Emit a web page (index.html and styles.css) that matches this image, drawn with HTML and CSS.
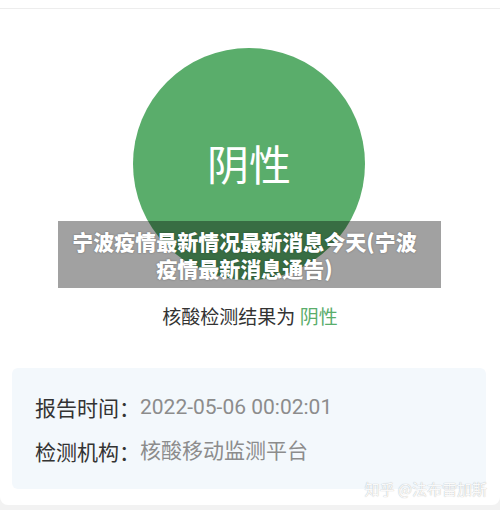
FILE: index.html
```html
<!DOCTYPE html>
<html lang="zh-CN">
<head>
<meta charset="utf-8">
<title>核酸检测结果</title>
<link rel="stylesheet" href="styles.css">
</head>
<body>
<div class="topbar"></div>
<main class="sheet">
  <div class="badge"><span class="badge-text">阴性</span></div>
  <p class="result">核酸检测结果为 <span class="result-value">阴性</span></p>
  <section class="info">
    <div class="info-row"><span class="info-label">报告时间：</span><span class="info-value">2022-05-06 00:02:01</span></div>
    <div class="info-row"><span class="info-label">检测机构：</span><span class="info-value">核酸移动监测平台</span></div>
  </section>
  <h1 class="caption">宁波疫情最新情况最新消息今天(宁波疫情最新消息通告)</h1>
  <div class="watermark">知乎 @法布雷加斯</div>
</main>
</body>
</html>
```
FILE: styles.css
```css
html, body {
  margin: 0;
  padding: 0;
}

body {
  width: 500px;
  height: 510px;
  overflow: hidden;
  background: #f2f2f2;
  font-family: Roboto, "Noto Sans CJK SC", sans-serif;
}

.topbar {
  height: 8px;
  background: #ffffff;
  border-bottom: 1px solid #ededed;
}

.sheet {
  position: relative;
  height: 496px;
  box-sizing: border-box;
  background: #ffffff;
  border-radius: 0 0 8px 8px;
  display: flex;
  flex-direction: column;
  align-items: center;
  padding-top: 39px;
}

.badge {
  width: 232px;
  height: 232px;
  border-radius: 50%;
  background: #5aad6b;
  display: flex;
  align-items: center;
  justify-content: center;
  margin-left: -2px;
}

.badge-text {
  color: #ffffff;
  font-family: "Noto Sans CJK SC", sans-serif;
  font-size: 42px;
  line-height: 1;
  margin-top: -2px;
}

.result {
  margin: 23px 0 0;
  font-family: "Noto Sans CJK SC", sans-serif;
  font-size: 19px;
  line-height: 26px;
  color: #333333;
}

.result-value {
  color: #5aad6b;
}

.info {
  align-self: stretch;
  margin: 39px 14px 0 12px;
  padding: 26px 23px 25px;
  background: #f3f8fc;
  border-radius: 6px;
  display: flex;
  flex-direction: column;
  gap: 18px;
}

.info-row {
  display: flex;
  align-items: center;
  font-size: 21px;
  line-height: 26px;
}

.info-label {
  color: #333333;
  font-family: "Noto Sans CJK SC", sans-serif;
  width: 105px;
  flex: none;
}

.info-value {
  color: #8c8c8c;
}

/* title banner laid over the badge */
.caption {
  position: absolute;
  left: 58px;
  top: 212px;
  width: 383px;
  height: 67px;
  box-sizing: border-box;
  margin: 0;
  padding: 7px 16px 0 6px;
  background: rgba(0, 0, 0, 0.37);
  color: #ffffff;
  font-family: "Noto Sans CJK SC", sans-serif;
  font-weight: 900;
  font-size: 21px;
  line-height: 27px;
  text-align: center;
  text-shadow: 0 0 2px rgba(0, 0, 0, 0.35);
}

.watermark {
  position: absolute;
  right: 13px;
  bottom: 6px;
  font-family: "Noto Sans CJK SC", sans-serif;
  font-size: 15px;
  line-height: 20px;
  color: rgba(255, 255, 255, 0.95);
  text-shadow: 0 0 1px rgba(0, 0, 0, 0.35);
}
```
